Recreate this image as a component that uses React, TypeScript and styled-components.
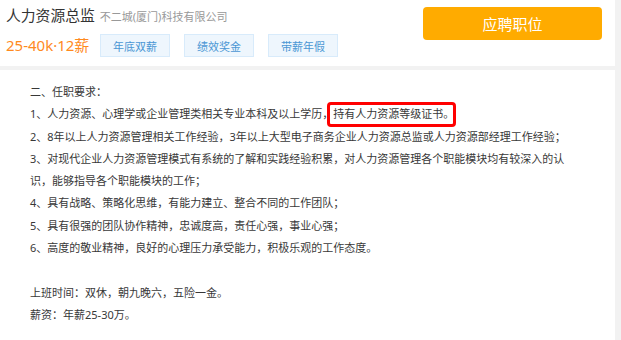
import React from "react";
import styled, { createGlobalStyle } from "styled-components";

const Global = createGlobalStyle`
  html, body { margin: 0; padding: 0; background: #f2f2f2; }
  body { font-family: "Noto Sans", "Noto Sans CJK SC", sans-serif; color: #333; }
  #root { width: 621px; height: 340px; overflow: hidden; }
`;

const Page = styled.div`
  display: flex;
  flex-direction: column;
  gap: 4px;
  width: 615px;
`;

const HeaderCard = styled.header`
  background: #fff;
  height: 66px;
  box-sizing: border-box;
  display: flex;
  justify-content: space-between;
  align-items: flex-start;
  padding: 0 13px 0 6px;
`;

const Info = styled.div`
  display: flex;
  flex-direction: column;
  gap: 8px;
  padding-top: 4px;
`;

const TitleRow = styled.div`
  display: flex;
  align-items: baseline;
  gap: 5px;
  height: 22px;
  line-height: 22px;
`;

const Title = styled.h1`
  margin: 0;
  font-size: 14.8px;
  font-weight: 400;
  color: #333;
`;

const Company = styled.span`
  font-size: 11px;
  color: #999;
`;

const MetaRow = styled.div`
  display: flex;
  align-items: center;
  gap: 14px;
`;

const Salary = styled.span`
  font-size: 15px;
  color: #ff8a1e;
  width: 80px;
  white-space: nowrap;
  line-height: 23px;
`;

const Tag = styled.span`
  box-sizing: border-box;
  width: 70px;
  height: 23px;
  display: flex;
  align-items: center;
  justify-content: center;
  font-size: 11px;
  color: #4b96d4;
  background: #eef6fd;
  border: 1px solid #d8ebfb;
`;

const ApplyButton = styled.button`
  margin-top: 7px;
  width: 179px;
  height: 33px;
  border: none;
  border-radius: 4px;
  background: #ffab00;
  color: #fff;
  font-family: inherit;
  font-size: 15px;
  cursor: pointer;
`;

const ContentCard = styled.section`
  background: #fff;
  height: 270px;
  box-sizing: border-box;
  padding: 11px 43px 0 30px;
`;

const Line = styled.p`
  margin: 0;
  font-size: 11px;
  line-height: 22.3px;
  min-height: 22.3px;
  color: #383838;
`;

const Highlight = styled.span`
  position: relative;
  &::after {
    content: "";
    position: absolute;
    left: -6px;
    right: -2px;
    top: -4px;
    bottom: -6px;
    border: 3px solid #f00;
    border-radius: 4px;
    pointer-events: none;
  }
`;

const tags = ["年底双薪", "绩效奖金", "带薪年假"];

export default function App() {
  return (
    <>
      <Global />
      <Page>
        <HeaderCard>
          <Info>
            <TitleRow>
              <Title>人力资源总监</Title>
              <Company>不二城(厦门)科技有限公司</Company>
            </TitleRow>
            <MetaRow>
              <Salary>25-40k·12薪</Salary>
              {tags.map((t) => (
                <Tag key={t}>{t}</Tag>
              ))}
            </MetaRow>
          </Info>
          <ApplyButton>应聘职位</ApplyButton>
        </HeaderCard>
        <ContentCard>
          <Line>二、任职要求：</Line>
          <Line>
            1、人力资源、心理学或企业管理类相关专业本科及以上学历，
            <Highlight>持有人力资源等级证书。</Highlight>
          </Line>
          <Line>2、8年以上人力资源管理相关工作经验，3年以上大型电子商务企业人力资源总监或人力资源部经理工作经验；</Line>
          <Line>3、对现代企业人力资源管理模式有系统的了解和实践经验积累，对人力资源管理各个职能模块均有较深入的认识，能够指导各个职能模块的工作；</Line>
          <Line>4、具有战略、策略化思维，有能力建立、整合不同的工作团队；</Line>
          <Line>5、具有很强的团队协作精神，忠诚度高，责任心强，事业心强；</Line>
          <Line>6、高度的敬业精神，良好的心理压力承受能力，积极乐观的工作态度。</Line>
          <Line />
          <Line>上班时间：双休，朝九晚六，五险一金。</Line>
          <Line>薪资：年薪25-30万。</Line>
        </ContentCard>
      </Page>
    </>
  );
}
